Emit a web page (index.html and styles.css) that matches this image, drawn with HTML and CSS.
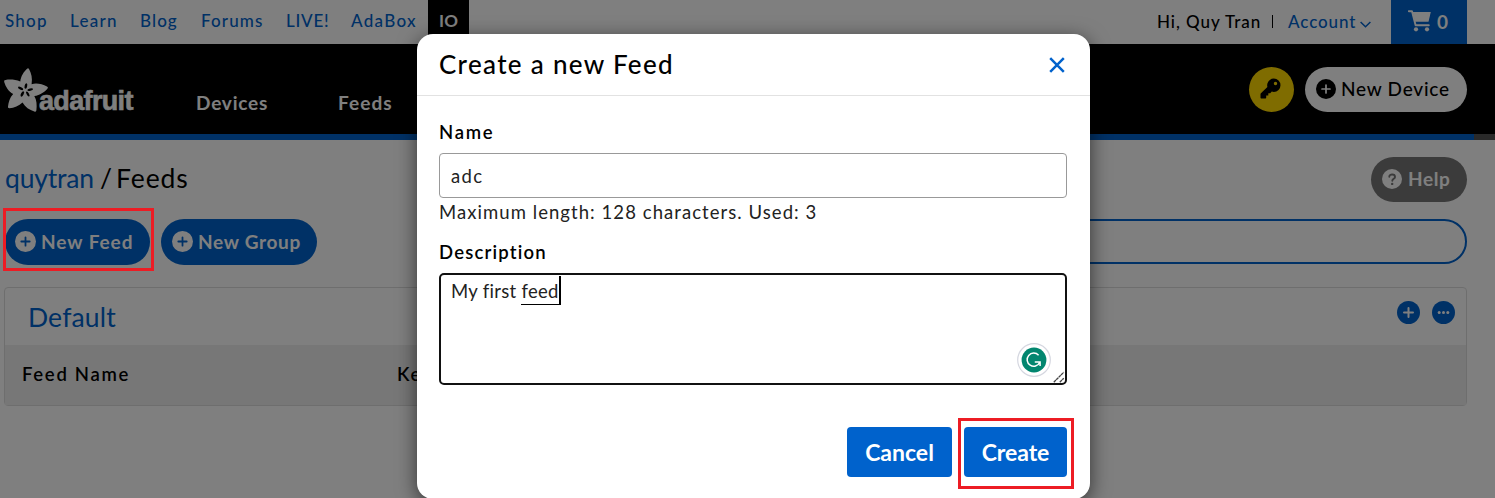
FILE: index.html
```html
<!DOCTYPE html>
<html lang="en">
<head>
<meta charset="utf-8">
<title>Feeds</title>
<link rel="stylesheet" href="styles.css">
</head>
<body>
<svg width="0" height="0" class="defs">
  <defs>
    <mask id="plus-cut"><rect width="20" height="20" fill="#fff"/><path d="M10 6v8M6 10h8" stroke="#000" stroke-width="1.7" stroke-linecap="round"/></mask>
    <symbol id="plus-circle" viewBox="0 0 20 20"><circle cx="10" cy="10" r="10" mask="url(#plus-cut)"/></symbol>
  </defs>
</svg>

<div class="topbar">
  <nav class="sites">
    <a class="shop">Shop</a><a class="learn">Learn</a><a class="blog">Blog</a><a class="forums">Forums</a><a class="live">LIVE!</a><a class="adabox">AdaBox</a>
    <a class="current">IO</a>
  </nav>
  <div class="account">
    <span class="hi">Hi, Quy Tran</span><span class="divider"></span><a class="acct">Account</a>
    <svg class="chevron" width="11" height="7" viewBox="0 0 11 7"><path d="M.6 1l4.900 4.800L10.400 1" fill="none" stroke="#0062cc" stroke-width="1.500"/></svg>
    <div class="cart">
      <svg width="24" height="22" viewBox="0 0 24 22"><path d="M.8 1.200H4l3.600 14.100h13.200" fill="none" stroke="#fff" stroke-width="1.900" stroke-linecap="round" stroke-linejoin="round"/><path d="M4.600 2h18.200l-2.300 9.700H7z" fill="#fff"/><circle cx="8" cy="19.300" r="2.100" fill="#fff"/><circle cx="19" cy="19.300" r="2.100" fill="#fff"/></svg>
      <b>0</b>
    </div>
  </div>
</div>

<header class="header">
  <div class="logo">
    <svg width="49" height="46" viewBox="0 0 49 46">
      <path fill="#fff" d="M20.300 14.600C20.800 9 24 4.500 27 1.700Q28.300.5 29 2C31.500 6.500 32.500 11 31.600 17.200C36.500 15.800 42 17 47 19.500Q48.800 20.500 47.400 21.700C44.500 25 40 28.200 34.300 29C36.800 33 37 38.500 36.400 43.300Q36.200 45.400 34.300 44.500C29.500 42.800 25 40 22.500 35.400C19 39 14 40.800 9.500 41.200Q7.500 41.300 8 39.400C8.500 35.500 9.800 30.500 13.200 27C8.500 24.500 5.800 20 4.200 15Q3.500 13 5.500 12.900C10.500 12.200 15.500 12.600 20.300 14.600z"/>
      <g fill="#000">
        <ellipse cx="25.900" cy="19" rx="1.300" ry="2.900" transform="rotate(12 25.900 19)"/>
        <ellipse cx="30.200" cy="22.600" rx="2.900" ry="1.200" transform="rotate(-12 30.200 22.600)"/>
        <ellipse cx="27.800" cy="27" rx="1.200" ry="2.800" transform="rotate(-30 27.800 27)"/>
        <ellipse cx="22.300" cy="27" rx="1.300" ry="2.900" transform="rotate(30 22.300 27)"/>
        <ellipse cx="20.600" cy="21.400" rx="2.900" ry="1.200" transform="rotate(28 20.600 21.400)"/>
      </g>
    </svg>
    <span class="wordmark">adafruit</span>
  </div>
  <a class="devices">Devices</a><a class="feeds">Feeds</a>
  <div class="key">
    <svg width="21" height="21" viewBox="0 0 21 21"><path fill-rule="evenodd" d="M13.800.5a6.700 6.700 0 0 1 0 13.400c-.7 0-1.300-.1-2-.3l-1.600 1.700H8.300v2.100H6.200v2.100c0 .6-.4 1-1 1H1.500c-.6 0-1-.4-1-1v-3.300c0-.4.1-.6.4-.9l6.500-6.400A6.700 6.700 0 0 1 13.800.5zM15.500 3.800a1.700 1.700 0 1 0 0 3.400a1.700 1.700 0 0 0 0-3.400z"/></svg>
  </div>
  <div class="device-btn"><svg width="20" height="20"><use href="#plus-circle"/></svg><span>New Device</span></div>
</header>
<div class="stripe"></div>

<main class="page">
  <div class="title-row">
    <h1><a>quytran</a><span class="slash">/</span><span class="crumb">Feeds</span></h1>
    <div class="help">
      <svg width="20" height="20" viewBox="0 0 20 20"><circle cx="10" cy="10" r="10" fill="#fff"/><path d="M7.300 7.700C7.300 4.800 13 4.800 13 7.900c0 1.900-2.700 1.900-2.700 3.900" fill="none" stroke="#777" stroke-width="1.900" stroke-linecap="round"/><circle cx="10.200" cy="14.900" r="1.200" fill="#777"/></svg>
      <span>Help</span>
    </div>
  </div>
  <div class="actions">
    <div class="pill feed-btn"><svg width="21" height="21"><use href="#plus-circle"/></svg><span>New Feed</span></div>
    <div class="pill group-btn"><svg width="21" height="21"><use href="#plus-circle"/></svg><span>New Group</span></div>
    <div class="search"></div>
  </div>
  <section class="panel">
    <div class="panel-head">
      <h2>Default</h2>
      <svg width="23" height="23" viewBox="0 0 23 23"><circle cx="11.500" cy="11.500" r="11.500"/><path d="M11.500 7v9M7 11.500h9" stroke="#fff" stroke-width="2" stroke-linecap="round"/></svg>
      <svg width="23" height="23" viewBox="0 0 23 23"><circle cx="11.500" cy="11.500" r="11.500"/><g fill="#fff"><circle cx="7.200" cy="11.500" r="1.500"/><circle cx="11.500" cy="11.500" r="1.500"/><circle cx="15.800" cy="11.500" r="1.500"/></g></svg>
    </div>
    <div class="columns"><span class="col-name">Feed Name</span><span>Key</span></div>
  </section>
</main>

<div class="backdrop">
  <div class="modal">
    <div class="modal-head">
      <h3>Create a new Feed</h3>
      <svg width="16" height="16" viewBox="0 0 16 16"><path d="M1.200 1.200l13.600 13.600M14.800 1.200L1.200 14.800" stroke="#0062cc" stroke-width="2.500"/></svg>
    </div>
    <div class="modal-body">
      <label class="l-name">Name</label>
      <div class="input">adc</div>
      <div class="hint">Maximum length: 128 characters. Used: 3</div>
      <label class="l-desc">Description</label>
      <div class="textarea"><span>My first&nbsp;</span><span class="typing">feed</span>
        <svg class="grammar" width="34" height="34" viewBox="0 0 34 34"><circle cx="17" cy="17" r="16.300" fill="#fff" stroke="#d5d7e0" stroke-width="1.200"/><circle cx="17" cy="17" r="12.400" fill="#02866f"/><path d="M21.600 12.200A6.600 6.600 0 1 0 22.700 19.500M17.800 18.900h5.300v4" fill="none" stroke="#fff" stroke-width="1.500"/></svg>
        <svg class="grip" width="12" height="12" viewBox="0 0 12 12"><path d="M.8 11.200L10.800 1.200M6.800 11.200l4-4" stroke="#444" stroke-width="1.300" stroke-dasharray="3 .4"/></svg>
      </div>
    </div>
    <div class="modal-foot"><button class="cancel">Cancel</button><button class="create">Create</button></div>
  </div>
</div>
<div class="mark mark-feed"></div>
<div class="mark mark-create"></div>
</body>
</html>
```
FILE: styles.css
```css
* { box-sizing: border-box; }
body {
  margin: 0;
  height: 498px;
  overflow: hidden;
  background: #fff;
  color: #000;
  font-family: Lato, "Open Sans", sans-serif;
}
h1, h2, h3 { margin: 0; }
svg { flex: none; }
.defs { position: absolute; }

/* Site bar */
.topbar { display: flex; justify-content: space-between; height: 44px; padding-right: 28px; font-size: 17px; font-weight: 500; }
.sites { display: flex; padding-left: 5px; line-height: 42px; color: #0062cc; white-space: nowrap; }
.shop { width: 65px; letter-spacing: 1.2px; }
.learn { width: 70px; letter-spacing: 1.25px; }
.blog { width: 61px; letter-spacing: 1.1px; }
.forums { width: 85px; letter-spacing: 1.15px; }
.live { width: 65px; letter-spacing: .75px; }
.adabox { width: 77px; letter-spacing: 1.3px; }
.current { width: 41px; padding-left: 11px; background: #000; color: #fff; font-weight: 700; letter-spacing: .1px; }
.account { display: flex; align-items: center; white-space: nowrap; }
.hi, .acct { padding-bottom: 1px; }
.hi { width: 115px; letter-spacing: .95px; }
.divider { width: 1px; height: 13px; margin: 0 16px 1px 0; background: #000; }
.acct { width: 71px; margin-left: -1px; color: #0062cc; letter-spacing: .9px; }
.chevron { margin: 4px 20px 0 1px; }
.cart { display: flex; align-items: center; width: 76px; height: 44px; padding-left: 17px; gap: 5px; background: #0062cc; color: #fff; font-size: 19px; padding-bottom: 2px; }

/* Main header */
.header { display: flex; align-items: center; height: 90px; background: #000; color: #fff; font-size: 19px; font-weight: 700; }
.logo { display: flex; width: 196px; height: 90px; padding-top: 23px; }
.wordmark { margin: 16px 0 0 -10px; font: 700 27px/36px "Liberation Sans", sans-serif; letter-spacing: -.65px; -webkit-text-stroke: .6px #fff; }
.devices, .feeds { padding-top: 26px; }
.devices { width: 142px; letter-spacing: .8px; }
.feeds { letter-spacing: 1.1px; }
.key { display: flex; align-items: center; justify-content: center; width: 45px; height: 45px; margin-left: auto; padding: 0 2px 2px 0; border-radius: 50%; background: #ffd800; }
.device-btn { display: flex; align-items: center; width: 162px; height: 45px; margin: 0 28px 0 11px; padding: 0 0 1px 11px; gap: 5px; border-radius: 23px; background: #fff; color: #000; font-weight: 500; letter-spacing: .75px; white-space: nowrap; }
.stripe { height: 6px; border-right: 21px solid #555; background: #0062cc; }

/* Page */
.page { padding: 17px 28px 0 5px; }
.title-row { display: flex; justify-content: space-between; }
h1 { padding-top: 2px; font-size: 26.5px; line-height: 38px; font-weight: 400; }
h1 a { display: inline-block; width: 95px; color: #0062cc; letter-spacing: -.2px; }
.slash { display: inline-block; width: 16px; }
.crumb { letter-spacing: .9px; }
.help { display: flex; align-items: center; width: 96px; height: 45px; padding: 0 0 2px 11px; gap: 6px; border-radius: 23px; background: #777; color: #fff; font-size: 19px; font-weight: 700; letter-spacing: .6px; }
.actions { display: flex; padding-top: 17px; }
.pill { display: flex; align-items: center; height: 46px; padding: 0 0 1px 10px; gap: 5px; border-radius: 23px; background: #0062cc; color: #fff; fill: #fff; font-size: 19px; font-weight: 700; white-space: nowrap; }
.feed-btn { width: 145px; margin-right: 11px; letter-spacing: .95px; }
.group-btn { width: 156px; padding-left: 11px; letter-spacing: .7px; }
.search { flex: 1; height: 45px; margin-left: 400px; border: 2px solid #0062cc; border-radius: 23px; }
.panel { margin: 22px 0 0 -1px; height: 119px; border: 1px solid #ddd; border-radius: 4px; }
.panel-head { display: flex; align-items: center; gap: 12px; height: 57px; padding: 0 11px 8px 23px; fill: #0062cc; }
h2 { flex: 1; padding-top: 9px; color: #0062cc; font-size: 26.5px; line-height: 49px; font-weight: 400; letter-spacing: .15px; }
.columns { display: flex; height: 60px; padding-left: 17px; background: #eee; font-size: 18.5px; line-height: 59px; font-weight: 600; letter-spacing: 1.7px; }
.col-name { width: 375px; }

/* Dialog */
.backdrop { position: absolute; inset: 0; padding: 34px 0 0 417px; background: rgba(0, 0, 0, .5); }
.modal { width: 673px; height: 465px; border-radius: 16px; background: #fff; box-shadow: 0 5px 20px rgba(0, 0, 0, .6); }
.modal-head { display: flex; align-items: center; justify-content: space-between; height: 62px; padding: 0 25px 0 22px; border-bottom: 1px solid #e2e2e2; }
h3 { font-size: 26px; font-weight: 500; line-height: 60px; padding-bottom: 2px; letter-spacing: 1.32px; }
.modal-body { display: flex; flex-direction: column; padding: 22px 23px 0 22px; font-size: 18.5px; color: #222; }
label { height: 35px; line-height: 28px; font-weight: 600; color: #000; }
.l-name { letter-spacing: 1.7px; }
.l-desc { height: 34px; line-height: 27px; letter-spacing: 1.2px; }
.input { height: 45px; padding-left: 11px; border: 1px solid #999; border-radius: 4px; line-height: 45px; letter-spacing: 1.3px; }
.hint { height: 41px; line-height: 29px; letter-spacing: 1.06px; }
.textarea { position: relative; display: flex; align-items: flex-start; height: 112px; padding: 1px 0 0 10px; border: 2px solid #111; border-radius: 5px; line-height: 31px; letter-spacing: .3px; }
.typing { height: 29px; border-right: 2px solid #000; border-bottom: 1px solid #000; }
.grammar { position: absolute; left: 576px; top: 68px; }
.grip { position: absolute; right: 0; bottom: 0; }
.modal-foot { display: flex; justify-content: flex-end; gap: 12px; padding: 42px 23px 0 0; }
button { height: 50px; padding: 0 0 1px; border: 0; border-radius: 4px; background: #0062cc; color: #fff; font: 700 23px Lato, sans-serif; }
.cancel { width: 105px; }
.create { width: 103px; letter-spacing: -.05px; }

/* Callouts drawn over the page */
.mark { position: absolute; border: 3px solid #ed1c24; }
.mark-feed { left: 3px; top: 208px; width: 151px; height: 63px; }
.mark-create { left: 958px; top: 418px; width: 116px; height: 71px; }
```
